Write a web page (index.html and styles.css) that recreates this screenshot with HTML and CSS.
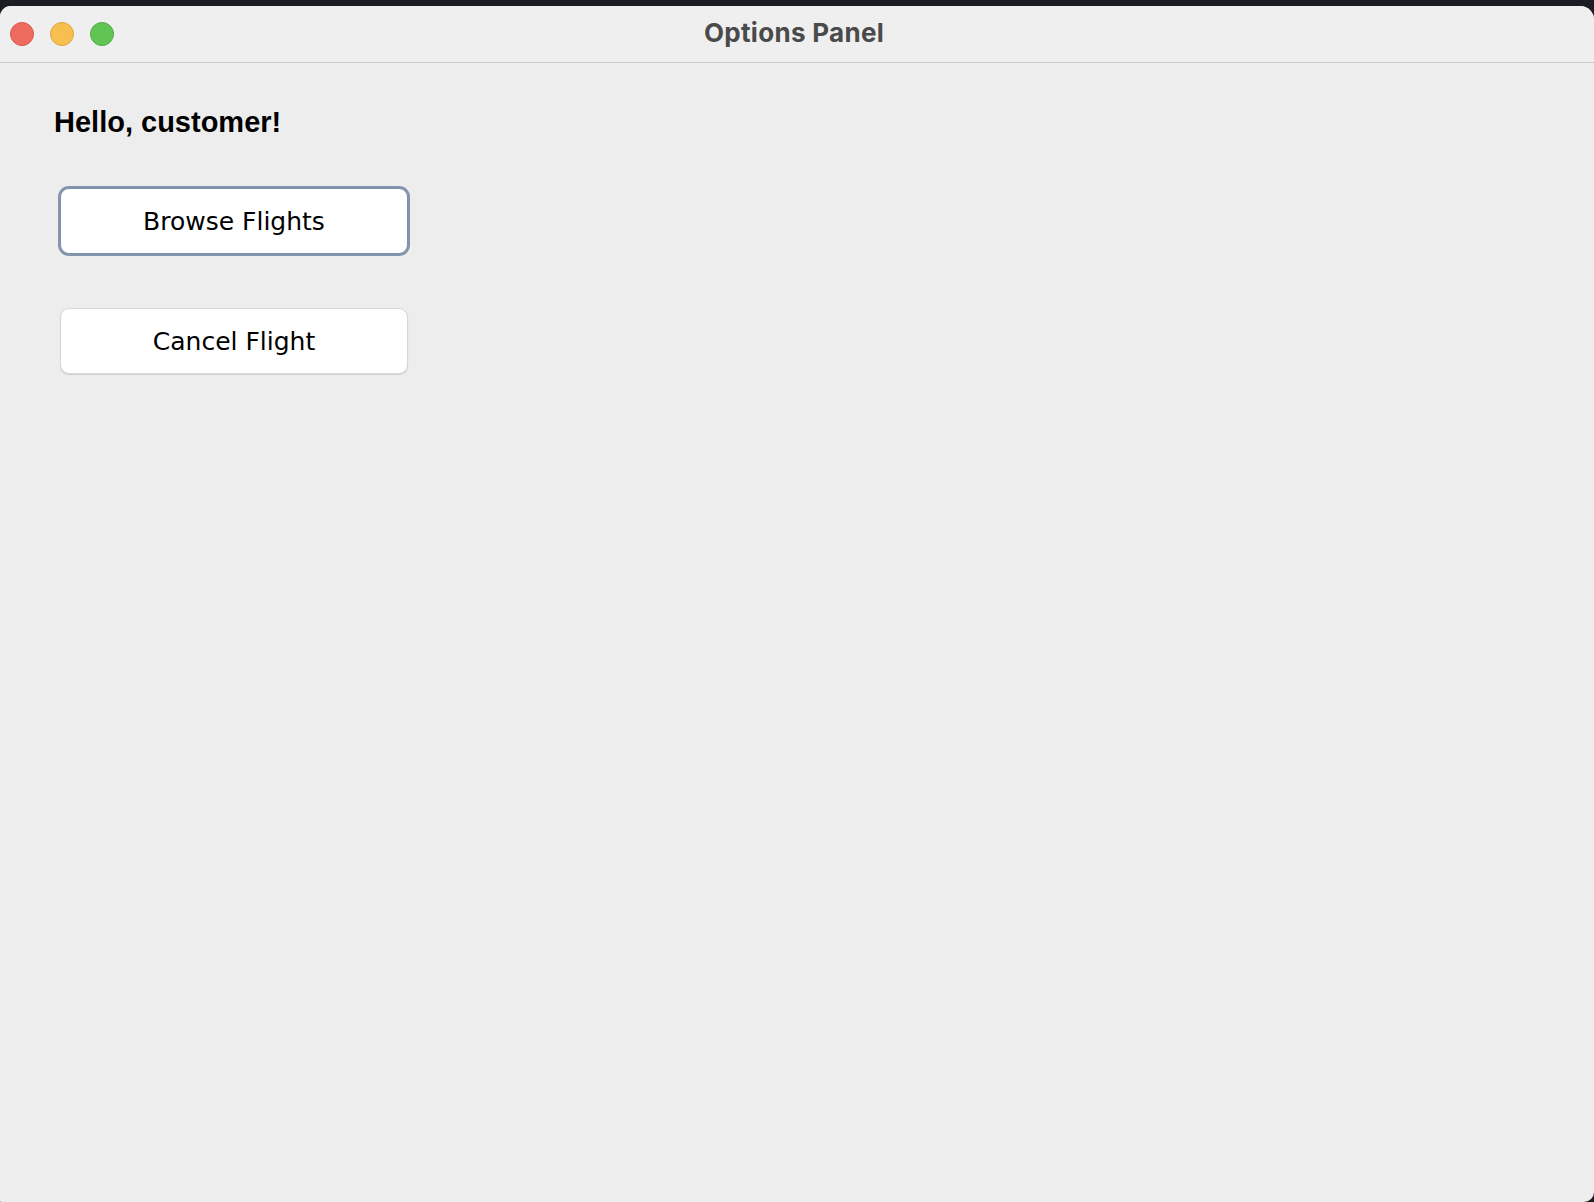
FILE: index.html
```html
<!DOCTYPE html>
<html>
<head>
<meta charset="utf-8">
<title>Options Panel</title>
<link rel="stylesheet" href="styles.css">
</head>
<body>
<div class="window">
  <header class="titlebar">
    <div class="lights">
      <span class="light red"></span>
      <span class="light yellow"></span>
      <span class="light green"></span>
    </div>
    <div class="title">Options Panel</div>
    <div class="spacer"></div>
  </header>
  <main class="content">
    <h1 class="greeting">Hello, customer!</h1>
    <div class="buttons">
      <button class="btn focused">Browse Flights</button>
      <button class="btn">Cancel Flight</button>
    </div>
  </main>
</div>
</body>
</html>
```

FILE: styles.css
```css
html, body {
  margin: 0;
  padding: 0;
  background: #1b1d22;
  height: 100%;
  overflow: hidden;
}

.window {
  margin-top: 6px;
  height: 1196px;
  background: #ededed;
  border-radius: 11px 14px 10px 1px;
  overflow: hidden;
  display: flex;
  flex-direction: column;
}

.titlebar {
  height: 56px;
  flex: none;
  background: #efefef;
  border-bottom: 1px solid #c8c8c8;
  display: grid;
  grid-template-columns: 1fr auto 1fr;
  align-items: center;
}

.lights {
  display: flex;
  gap: 16px;
  padding-left: 10px;
}

.light {
  width: 24px;
  height: 24px;
  border-radius: 50%;
  box-sizing: border-box;
}

.red { background: #ee6b60; border: 1px solid #d8574c; }
.yellow { background: #f6bf4f; border: 1px solid #dea53a; }
.green { background: #61c554; border: 1px solid #4fab43; }

.title {
  font-family: "Inter", "Liberation Sans", sans-serif;
  font-weight: 700;
  font-size: 26px;
  color: #4a4a4a;
  letter-spacing: 0.3px;
  padding: 0 6px 4px 0;
}

.content {
  flex: 1;
  padding: 42px 0 0 54px;
}

.greeting {
  margin: 0;
  font-family: "Liberation Sans", Arial, sans-serif;
  font-weight: 700;
  font-size: 29px;
  line-height: 34px;
  color: #000;
}

.buttons {
  display: flex;
  flex-direction: column;
  align-items: flex-start;
  gap: 54px;
  margin-top: 49px;
  padding-left: 6px;
}

.btn {
  width: 348px;
  height: 66px;
  box-sizing: border-box;
  background: #fff;
  border: 1px solid #d6d6d6;
  border-radius: 9px;
  box-shadow: 0 1px 1px rgba(0, 0, 0, 0.12);
  font-family: "DejaVu Sans", Verdana, sans-serif;
  font-size: 25px;
  color: #000;
  padding: 0;
  display: flex;
  align-items: center;
  justify-content: center;
}

.btn.focused {
  border: 1px solid #7f91a8;
  box-shadow: 0 0 0 2px #8394ab;
}
```
